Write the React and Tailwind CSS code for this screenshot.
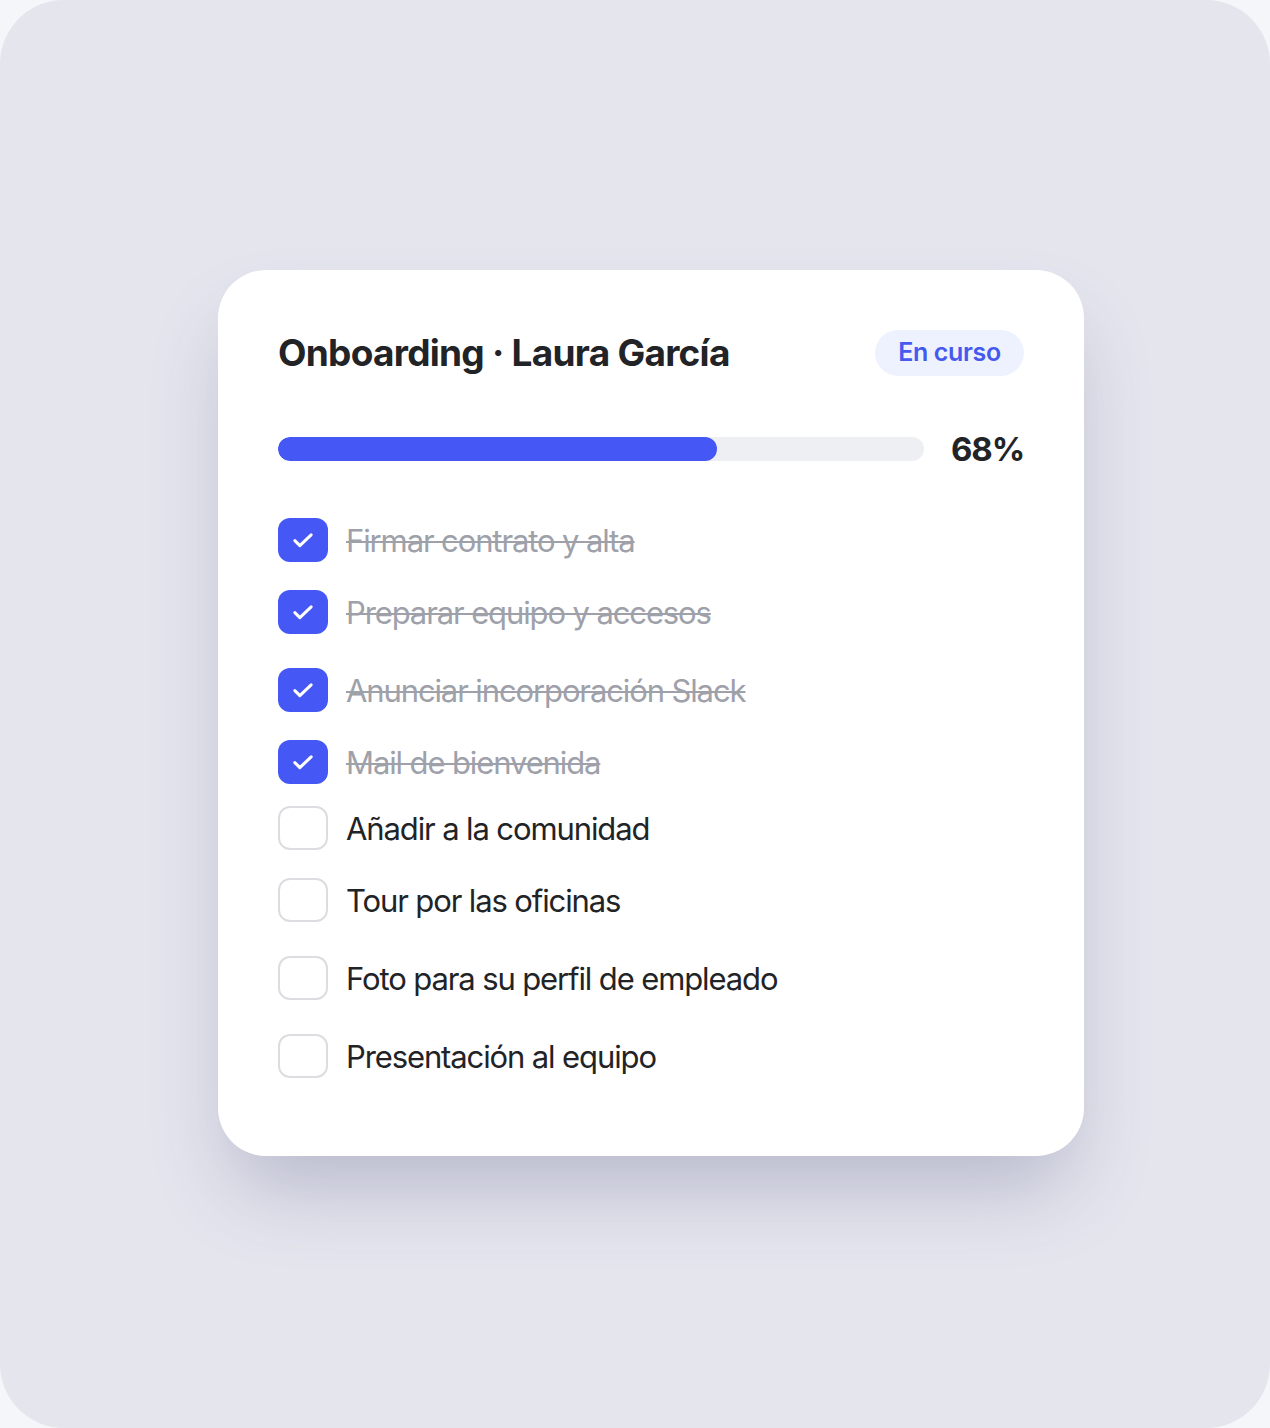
import React from 'react';

const tasks = [
    { label: 'Firmar contrato y alta', done: true, mt: 'mt-0' },
    { label: 'Preparar equipo y accesos', done: true, mt: 'mt-[28px]' },
    { label: 'Anunciar incorporación Slack', done: true, mt: 'mt-[34px]' },
    { label: 'Mail de bienvenida', done: true, mt: 'mt-[28px]' },
    { label: 'Añadir a la comunidad', done: false, mt: 'mt-[22px]' },
    { label: 'Tour por las oficinas', done: false, mt: 'mt-[28px]' },
    { label: 'Foto para su perfil de empleado', done: false, mt: 'mt-[34px]' },
    { label: 'Presentación al equipo', done: false, mt: 'mt-[34px]' },
];

const CheckIcon = () => (
    <svg width="28" height="28" viewBox="0 0 24 24" fill="none" stroke="white" strokeWidth="2.6" strokeLinecap="round" strokeLinejoin="round">
        <path d="M5 12.5l4.3 4.3L19 7.6" />
    </svg>
);

const App = () => {
    return (
        <div className="w-[1270px] h-[1428px] bg-[#f5f6f9] font-['Inter',sans-serif]">
            <div className="w-full h-full rounded-[64px] bg-[#e4e5ed] pl-[218px] pt-[270px]">
                <div className="w-[866px] h-[886px] bg-white rounded-[48px] shadow-[0_45px_80px_-15px_rgba(70,72,120,0.28)] px-[60px] pt-[60px]">
                    <div className="flex items-center justify-between h-[46px]">
                        <h1 className="text-[37px] font-bold tracking-[-0.02em] text-[#222326] leading-none -mt-[2px]">
                            Onboarding · Laura García
                        </h1>
                        <span className="h-[46px] w-[149px] rounded-full bg-[#edf2fe] text-[#4559ee] text-[25px] font-semibold tracking-[-0.015em] flex items-center justify-center">
                            En curso
                        </span>
                    </div>

                    <div className="flex items-center mt-[61px] h-[24px]">
                        <div className="w-[646px] h-[24px] rounded-full bg-[#eeeff2] overflow-hidden">
                            <div className="h-full rounded-full bg-[#4558f5]" style={{ width: '68%' }} />
                        </div>
                        <span className="ml-auto text-[33px] font-bold tracking-[-0.035em] text-[#222326] leading-none">68%</span>
                    </div>

                    <div className="flex flex-col mt-[57px]">
                        {tasks.map((t) => (
                            <div key={t.label} className={`flex items-center h-[44px] ${t.mt}`}>
                                {t.done ? (
                                    <div className="w-[50px] h-[44px] rounded-[12px] bg-[#4558f5] flex items-center justify-center shrink-0">
                                        <CheckIcon />
                                    </div>
                                ) : (
                                    <div className="w-[50px] h-[44px] rounded-[12px] border-2 border-[#dcdde1] bg-white shrink-0" />
                                )}
                                <span
                                    className={`ml-[18px] text-[31px] tracking-[-0.036em] leading-none ${
                                        t.done
                                            ? 'text-[#9ea1aa] line-through decoration-[2px]'
                                            : 'text-[#222326]'
                                    }`}
                                >
                                    {t.label}
                                </span>
                            </div>
                        ))}
                    </div>
                </div>
            </div>
        </div>
    );
};

export default App;
